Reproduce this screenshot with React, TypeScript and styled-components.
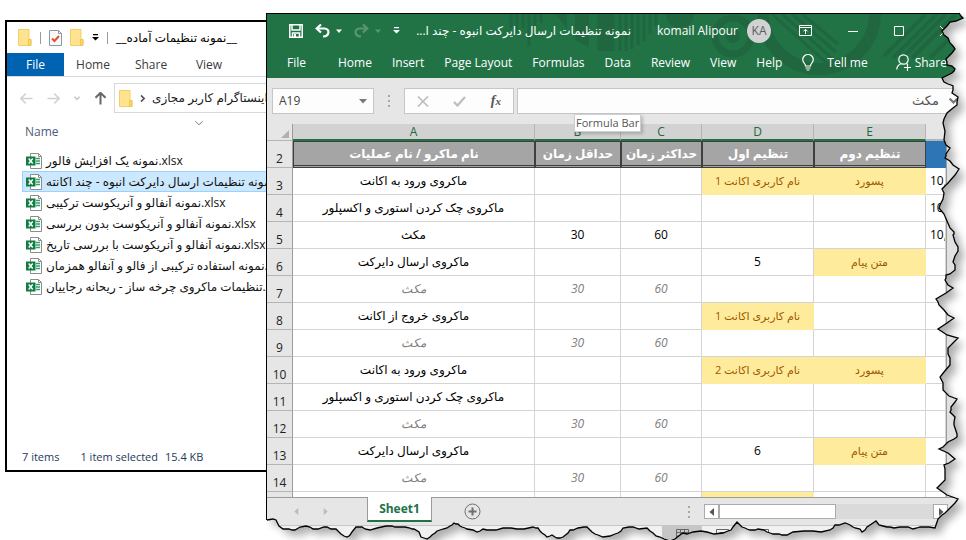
import React from "react";
import styled, { createGlobalStyle, css } from "styled-components";

const Global = createGlobalStyle`
  *, *::before, *::after { box-sizing: border-box; }
  body { margin: 0; background: #fff; font: 12px/16px "Open Sans", "DejaVu Sans", sans-serif; color: #1b1b1b; }
  button, input { font: inherit; color: inherit; border: 0; margin: 0; padding: 0; background: none; }
  svg { display: block; flex: none; }
`;

/* ---------- desktop and windows ---------- */

const Desktop = styled.main`
  position: relative;
  height: 100vh;
  min-height: 320px;
  overflow: hidden;
`;

const ExplorerWindow = styled.section`
  position: absolute;
  left: 5px;
  top: 20px;
  bottom: 68px;
  width: 320px;
  display: flex;
  flex-direction: column;
  border: 2px solid #000;
  background: #fff;
`;

const ExcelWindow = styled.section`
  position: absolute;
  left: 266px;
  top: 13px;
  right: 0;
  bottom: 0;
  display: flex;
  flex-direction: column;
  border-left: 1px solid #000;
  border-top: 1px solid #000;
  background: #e6e6e6;
`;

/* ---------- file explorer ---------- */

const ExplorerTitle = styled.header`
  display: flex;
  align-items: center;
  gap: 8px;
  height: 31px;
  padding-left: 11px;
  color: #000;
`;

const Divider = styled.span`
  width: 1px;
  height: 12px;
  background: #9a9a9a;
`;

const ExplorerTabs = styled.nav`
  display: flex;
  height: 24px;
  border-bottom: 1px solid #dadbdc;
`;

const ExplorerTab = styled.button<{ $active?: boolean }>`
  width: ${(p) => (p.$active ? 57 : 58)}px;
  color: ${(p) => (p.$active ? "#fff" : "#3b3b3b")};
  background: ${(p) => (p.$active ? "#0063b1" : "transparent")};
`;

const AddressRow = styled.div`
  display: flex;
  align-items: center;
  height: 42px;
`;

const NavButtons = styled.div`
  display: flex;
  align-items: center;
  width: 107px;
  gap: 14px;
  padding-left: 13px;
`;

const AddressBox = styled.div`
  flex: 1;
  display: flex;
  align-items: center;
  gap: 6px;
  height: 30px;
  padding-left: 4px;
  border: 1px solid #d9d9d9;
  white-space: nowrap;
  overflow: hidden;
`;

const ColumnHead = styled.button`
  display: flex;
  align-items: flex-start;
  height: 31px;
  padding-left: 18px;
  gap: 136px;
  color: #4c607a;
  text-align: left;

  span { padding-top: 5px; }
`;

const FileList = styled.ul`
  flex: 1;
  margin: 0;
  padding: 0 0 0 15px;
  list-style: none;
  overflow: hidden;
`;

const FileRow = styled.li<{ $selected?: boolean }>`
  display: flex;
  align-items: center;
  gap: 4px;
  height: 21px;
  padding-left: 3px;
  border: 1px solid ${(p) => (p.$selected ? "#99d1ff" : "transparent")};
  background: ${(p) => (p.$selected ? "#cce8ff" : "transparent")};
  color: #111;
  font-size: 12px;
  white-space: nowrap;
`;

const ExplorerStatus = styled.footer`
  display: flex;
  gap: 21px;
  height: 24px;
  align-items: center;
  padding: 0 0 2px 15px;
  color: #1e395b;
  font-size: 11px;

  span + span + span { margin-left: -14px; }
`;

/* ---------- spreadsheet chrome ---------- */

const ExcelHeader = styled.header`
  position: relative;
  flex: none;
  background: #217346;
  color: #fff;
  overflow: hidden;
`;

const HeaderArt = styled.svg`
  position: absolute;
  left: 0;
  top: 0;
`;

const TitleRow = styled.div`
  position: relative;
  display: flex;
  align-items: center;
  height: 33px;
  padding: 0 0 0 22px;
  white-space: nowrap;
`;

const QuickAccess = styled.div`
  display: flex;
  flex: none;
  align-items: center;
  gap: 12px;
  width: 132px;
`;

const ToolButton = styled.button<{ $dim?: boolean }>`
  display: flex;
  align-items: center;
  gap: 6px;
  opacity: ${(p) => (p.$dim ? 0.25 : 1)};
`;

const DocTitle = styled.h1`
  flex: none;
  width: 210px;
  margin: 0;
  font: inherit;
  font-size: 12px;
  white-space: nowrap;
`;

const Account = styled.div`
  display: flex;
  flex: none;
  align-items: center;
  justify-content: flex-end;
  gap: 9px;
  width: 140px;
`;

const Avatar = styled.span`
  width: 24px;
  height: 24px;
  border-radius: 50%;
  background: #d2d2d2;
  color: #5c5c5c;
  font-size: 12px;
  line-height: 24px;
  text-align: center;
`;

const WindowButtons = styled.div`
  display: flex;
  align-items: center;
  gap: 36px;
  margin-left: 28px;
`;

const RibbonTabs = styled.nav`
  position: relative;
  display: flex;
  align-items: center;
  gap: 20px;
  height: 31px;
  padding-left: 20px;
  white-space: nowrap;
`;

const RibbonTab = styled.button<{ $first?: boolean; $far?: boolean }>`
  display: flex;
  flex: none;
  align-items: center;
  gap: ${(p) => (p.$far ? 4 : 13)}px;
  margin-right: ${(p) => (p.$first ? 12 : 0)}px;
  margin-left: ${(p) => (p.$far ? 8 : 0)}px;
`;

const FormulaRow = styled.div`
  display: flex;
  align-items: center;
  flex: none;
  height: 46px;
  padding-left: 5px;
`;

const NameBox = styled.div`
  display: flex;
  align-items: center;
  width: 102px;
  height: 26px;
  padding: 0 6px;
  border: 1px solid #c6c6c6;
  background: #fdfdfd;
  color: #444;

  input { flex: 1; width: 60px; }
`;

const Dots = styled.span`
  display: grid;
  gap: 3px;
  width: 30px;
  justify-content: center;

  i { width: 2px; height: 2px; background: #a8a8a8; }
`;

const FormulaActions = styled.div`
  display: flex;
  align-items: center;
  justify-content: space-between;
  width: 110px;
  height: 26px;
  padding: 0 12px;
  border: 1px solid #c6c6c6;
  background: #fdfdfd;
`;

const FxButton = styled.button`
  font: italic bold 14px/16px "Liberation Serif", serif;
  color: #555;

  small { font-size: 11px; }
`;

const FormulaBox = styled.div`
  flex: 1;
  display: flex;
  align-items: center;
  gap: 10px;
  height: 26px;
  margin-left: 3px;
  padding: 0 8px 2px 8px;
  border: 1px solid #c6c6c6;
  border-right: 0;
  background: #fdfdfd;
  color: #555;

  input { flex: 1; min-width: 0; text-align: right; font-size: 13px; }
`;

const Tooltip = styled.div`
  position: absolute;
  left: 307px;
  top: 100px;
  height: 18px;
  padding: 0 1px;
  border: 1px solid #cfcfcf;
  background: #fff;
  color: #575757;
  font-size: 11px;
  line-height: 16px;
  box-shadow: 2px 2px 3px rgba(0, 0, 0, 0.2);
`;

/* ---------- sheet ---------- */

const SheetArea = styled.div`
  flex: 1;
  min-height: 0;
  display: flex;
  overflow: hidden;
  border-bottom: 1px solid #9b9b9b;
`;

const ScrollTrack = styled.div`
  flex: none;
  width: 20px;
  border-left: 1px solid #9b9b9b;
  background: #e1e1e1;
`;

const Grid = styled.table`
  flex: 1;
  min-width: 0;
  width: 100%;
  height: max-content;
  table-layout: fixed;
  border-collapse: separate;
  border-spacing: 0;
  background: #fff;
`;

const ColHead = styled.th<{ $plain?: boolean }>`
  height: 17px;
  padding: 0;
  font-weight: 400;
  line-height: 14px;
  color: #216843;
  background: ${(p) => (p.$plain ? "#e6e6e6" : "#d2d2d2")};
  border-right: 1px solid ${(p) => (p.$plain ? "#e6e6e6" : "#b5b5b5")};
  border-bottom: 2px solid ${(p) => (p.$plain ? "#b5b5b5" : "#217346")};
`;

const Corner = styled.th`
  height: 17px;
  padding: 3px 3px 0 14px;
  background: #e6e6e6;
  border-right: 1px solid #9b9b9b;
  border-bottom: 1px solid #b5b5b5;
`;

const RowHead = styled.th`
  height: 27px;
  padding: 9px 0 0;
  font-weight: 400;
  font-size: 12px;
  line-height: 16px;
  color: #222;
  background: #e6e6e6;
  border-right: 1px solid #9b9b9b;
  border-bottom: 1px solid #b5b5b5;
`;

type CellKind = "plain" | "muted" | "input" | "head" | "blue" | "left";

const kinds = {
  plain: css`color: #000;`,
  muted: css`color: #808080; font-style: italic;`,
  input: css`color: #9c5700; background: #ffeb9c; border-color: #ffeb9c;`,
  head: css`
    color: #fff;
    font-weight: 700;
    background: #a5a5a5;
    border: 1px solid #3f3f3f;
    box-shadow: inset 0 -1px 0 #a5a5a5, inset 0 -2px 0 #3f3f3f;
  `,
  blue: css`background: #2e75b6; border-color: #2e75b6;`,
  left: css`color: #000; text-align: left; padding-left: 4px;`,
};

const Cell = styled.td<{ $kind: CellKind; $small?: boolean }>`
  height: 27px;
  padding: 0 0 1px;
  overflow: hidden;
  font-size: ${(p) => (p.$small ? 11 : 12)}px;
  line-height: 18px;
  text-align: center;
  white-space: nowrap;
  border-right: 1px solid #d4d4d4;
  border-bottom: 1px solid #d4d4d4;
  ${(p) => kinds[p.$kind]}
`;

const SheetBar = styled.div`
  display: flex;
  flex: none;
  height: 28px;
  border-bottom: 1px solid #c6c6c6;
`;

const SheetNav = styled.div`
  display: flex;
  align-items: center;
  gap: 22px;
  width: 100px;
  padding-left: 26px;
`;

const SheetTab = styled.button`
  position: relative;
  width: 65px;
  height: 25px;
  margin-top: -1px;
  background: #fff;
  border-left: 1px solid #9b9b9b;
  border-right: 1px solid #9b9b9b;
  border-bottom: 2px solid #217346;
  color: #217346;
  font-weight: 700;
`;

const AddSheet = styled.button`
  display: flex;
  align-items: center;
  margin-left: 32px;
`;

const HScroll = styled.div`
  display: flex;
  align-items: center;
  margin-left: auto;
  padding-right: 18px;
`;

const ScrollButton = styled.button`
  display: grid;
  place-items: center;
  width: 15px;
  height: 15px;
  border: 1px solid #ababab;
  background: #fff;
`;

const Rail = styled.div`
  width: 214px;
  height: 15px;
  background: #dadada;

  &::before {
    content: "";
    display: block;
    width: 117px;
    height: 15px;
    border: 1px solid #ababab;
    background: #fff;
  }
`;

const StatusBar = styled.footer`
  display: flex;
  flex: none;
  height: 14px;
  padding-left: 395px;
  background: #f1f1f1;
  color: #777;
  overflow: hidden;
`;

const ViewButton = styled.button<{ $on?: boolean }>`
  display: grid;
  justify-content: center;
  width: 40px;
  padding-top: 3px;
  background: ${(p) => (p.$on ? "#c6c6c6" : "transparent")};
`;

const TornLayer = styled.svg`
  position: absolute;
  left: 0;
  top: 0;
  width: 100%;
  height: 100%;
  pointer-events: none;
`;

/* ---------- icons ---------- */

const Folder = () => (
  <svg width="14" height="17" viewBox="0 0 14 17">
    <path d="M.5.5h10.500v10h2v6H.5z" fill="#ffe391" stroke="#f3cf62" />
    <path d="M10.500 10.500h2.500v5.500h-2.500z" fill="#ffd75e" stroke="#e9bf4c" strokeWidth=".7" />
  </svg>
);

const CheckedPage = () => (
  <svg width="13" height="16" viewBox="0 0 13 16">
    <path d="M.5.5h9l3 3v12H.5z" fill="#f7f9fb" stroke="#8d98a6" />
    <path d="M9.500.5v3h3" fill="none" stroke="#8d98a6" />
    <path d="m3 8.500 2.500 2.500L10 6" fill="none" stroke="#e8501f" strokeWidth="2" />
  </svg>
);

const Overflow = ({ color = "#000" }: { color?: string }) => (
  <svg width="7" height="7" viewBox="0 0 7 7" fill={color}>
    <path d="M1 0h5v1.300H1zM0 3h7L3.500 6.500z" />
  </svg>
);

const Arrow = ({ turn, color, size = 13, weight = 1.6 }: { turn: number; color: string; size?: number; weight?: number }) => (
  <svg width={size} height={size} viewBox="0 0 13 13" fill="none" stroke={color} strokeWidth={weight}>
    <path transform={`rotate(${turn} 6.500 6.500)`} d="M12.500 6.500H1M5.800 1.500l-5 5 5 5" />
  </svg>
);

const Chevron = ({ turn = 0, color = "#777", size = 8, weight = 1 }: { turn?: number; color?: string; size?: number; weight?: number }) => (
  <svg width={size} height={size} viewBox="0 0 8 8" fill="none" stroke={color} strokeWidth={weight}>
    <path transform={`rotate(${turn} 4 4)`} d="m.5 2.300 3.500 3.500 3.500-3.500" />
  </svg>
);

const Triangle = ({ turn = 0, color = "#777", size = 8 }: { turn?: number; color?: string; size?: number }) => (
  <svg width={size} height={size} viewBox="0 0 8 8" fill={color}>
    <path transform={`rotate(${turn} 4 4)`} d="M0 2h8L4 6.500z" />
  </svg>
);

const ExcelFile = () => (
  <svg width="16" height="16" viewBox="0 0 16 16">
    <path d="M4.500.5h8l3 3v12h-11z" fill="#fff" stroke="#8c8c8c" />
    <path d="M12.500.5v3h3" fill="none" stroke="#8c8c8c" />
    <path d="M10 5.500h4M10 8h4M10 10.500h4" stroke="#33a06f" strokeWidth="1.300" />
    <path d="M0 3.500h9.500v9H0z" fill="#107c41" />
    <path d="m2.700 5.500 4 5M6.700 5.500l-4 5" stroke="#fff" strokeWidth="1.500" />
  </svg>
);

const Save = () => (
  <svg width="14" height="14" viewBox="0 0 14 14" fill="none" stroke="#fff" strokeWidth="1.500">
    <path d="M.8.8h12.400v12.400H.8zM3 1v5h8V1M3.500 13V9h7v4" />
    <path d="M5 10h2v3H5z" fill="#fff" stroke="none" />
  </svg>
);

const Undo = ({ flip }: { flip?: boolean }) => (
  <svg width="15" height="14" viewBox="0 0 15 14" fill="none" stroke="#fff" strokeWidth="2.200">
    <g transform={flip ? "matrix(-1 0 0 1 15 0)" : undefined}>
      <path d="M2 4.500h7.500c5.500 0 5.500 7.500-1.500 8" />
      <path d="M6 .5l-4.300 4 4.300 4" />
    </g>
  </svg>
);

const Bulb = () => (
  <svg width="12" height="17" viewBox="0 0 12 17" fill="none" stroke="#fff" strokeWidth="1.200">
    <path d="M3.500 12C3.500 9.500.700 8.800.700 5.600a5.300 5.100 0 0 1 10.600 0c0 3.200-2.800 3.900-2.800 6.400zM3.500 14h5M4.500 16h3" />
  </svg>
);

const Person = () => (
  <svg width="15" height="17" viewBox="0 0 15 17" fill="none" stroke="#fff" strokeWidth="1.200">
    <circle cx="7.500" cy="5.500" r="4.700" />
    <path d="M.700 15.500c.3-3 2-5 4.300-5.800M10.500 9.500l1 .8M11.500 10v7M8 13.500h7" />
  </svg>
);

const RibbonOptions = () => (
  <svg width="13" height="11" viewBox="0 0 13 11" fill="none" stroke="#fff">
    <path d="M.5.5h12v10H.5zM.5 2.500h12M6.500 9V4.500M4.500 6.300l2-2 2 2" />
  </svg>
);

const ringArt = "#20663f";

const Decoration = () => (
  <HeaderArt width="700" height="64" viewBox="267 14 700 64" aria-hidden="true">
    <g fill="none" stroke={ringArt}>
      <path d="M511 14v14M517 14v20M523 14v14M529 14v32M535 14v14M541 14v9" strokeWidth="3" />
      <path d="M606 14v37" strokeWidth="17" />
      <path d="M620 14v37M626 14v37M632 14v35M638 14v31M644 14v27M650 14v20M656 14v12" strokeWidth="3" />
      <circle cx="733" cy="36" r="18" strokeWidth="7" />
      <circle cx="819" cy="13" r="56" strokeWidth="12" />
      <path d="M772 14l58 52M782 14l52 46M792 14l44 38M802 14l36 30" strokeWidth="3" />
      <path d="M893 58l44-44M900 60l46-46M912 58l44-44M930 58l34-34M884 56l42-42" strokeWidth="4" />
    </g>
    <g fill={ringArt}>
      <circle cx="680" cy="14" r="14" />
      <circle cx="733" cy="36" r="7" />
      <path d="M556 14h11v15zM575 14h14v33l-14-7z" />
    </g>
  </HeaderArt>
);

/* ---------- torn edge ---------- */

const edge: [number, number][] = [
  [959, 13], [963, 18], [950, 22], [942, 31], [944, 35], [950, 43], [955, 49], [946, 59], [947, 65],
  [955, 69], [952, 73], [942, 78], [948, 84], [953, 86], [952, 93], [958, 97], [957, 105], [947, 113],
  [943, 123], [944, 140], [950, 148], [946, 154], [945, 158], [953, 165], [959, 169], [948, 183],
  [942, 189], [943, 199], [939, 208], [947, 221], [954, 232], [953, 235], [958, 247], [955, 256],
  [953, 262], [955, 270], [946, 275], [945, 280], [953, 288], [936, 299], [939, 305], [944, 310],
  [954, 318], [938, 329], [958, 338], [948, 348], [950, 358], [950, 365], [940, 377], [943, 390],
  [957, 399], [951, 407], [950, 412], [955, 417], [954, 425], [956, 431], [957, 437], [948, 442],
  [939, 449], [955, 459], [944, 465], [945, 472], [945, 480], [937, 488], [958, 499], [949, 509],
  [942, 515], [938, 519], [935, 528], [920, 527], [913, 529], [900, 527], [890, 527], [883, 526],
  [876, 521], [867, 527], [862, 532], [855, 528], [850, 525], [845, 523], [835, 525], [830, 530],
  [813, 531], [793, 532], [782, 535], [773, 534], [767, 532], [758, 529], [752, 530], [747, 529],
  [742, 527], [737, 522], [731, 530], [723, 533], [707, 532], [693, 532], [683, 533], [675, 539],
  [667, 540], [660, 537], [653, 533], [647, 528], [633, 527], [623, 528], [618, 533], [610, 536],
  [598, 535], [592, 532], [587, 527], [578, 528], [570, 530], [563, 537], [557, 538], [552, 535],
  [547, 537], [542, 533], [538, 528], [533, 527], [517, 529], [503, 528], [490, 530], [483, 529],
  [477, 532], [467, 529], [462, 527], [458, 524], [454, 523], [450, 526], [443, 529], [437, 531],
  [432, 535], [427, 539], [421, 537], [414, 529], [410, 528], [397, 527], [392, 526], [377, 528],
  [365, 529], [356, 527], [350, 535], [347, 537], [341, 534], [336, 529], [327, 527], [318, 529],
  [310, 527], [300, 527], [292, 530], [283, 529], [276, 520], [267, 520],
];

/* Adds a small repeatable zigzag between the main points, as torn paper has. */
const tornLine = edge
  .map(([x, y], i) => {
    if (i === 0) return `M${x} ${y}`;
    const [px, py] = edge[i - 1];
    const jag = (i % 2 ? 1 : -1) * (Math.hypot(x - px, y - py) > 8 ? 1 : 0);
    return `L${Math.round((px + x) / 2) + jag} ${Math.round((py + y) / 2) - jag}L${x} ${y}`;
  })
  .join("");

const outside = `${tornLine}L266 520L266 541L967 541L967 12L959 12Z`;
const paper = `${tornLine}L267 13Z`;

const TornEdge = () => (
  <TornLayer viewBox="0 0 966 540" preserveAspectRatio="none" aria-hidden="true">
    <defs>
      <clipPath id="outside"><path d={outside} /></clipPath>
      <filter id="soft" x="-5%" y="-5%" width="110%" height="110%"><feGaussianBlur stdDeviation="4" /></filter>
    </defs>
    <g clipPath="url(#outside)">
      <path d={outside} fill="#fff" />
      <path d={paper} transform="translate(6 6)" fill="#000" opacity=".32" filter="url(#soft)" />
    </g>
    <path d={tornLine} fill="none" stroke="#000" strokeWidth="1.300" />
  </TornLayer>
);

/* ---------- data ---------- */

const files = [
  "نمونه یک افزایش فالور.xlsx",
  "نمونه تنظیمات ارسال دایرکت انبوه - چند اکانته.xlsx",
  "نمونه آنفالو و آنریکوست ترکیبی.xlsx",
  "نمونه آنفالو و آنریکوست بدون بررسی.xlsx",
  "نمونه آنفالو و آنریکوست با بررسی تاریخ.xlsx",
  "نمونه استفاده ترکیبی از فالو و آنفالو همزمان.xlsx",
  "تنظیمات ماکروی چرخه ساز - ریحانه رجاییان.xlsx",
];

const headings = ["نام ماکرو / نام عملیات", "حداقل زمان", "حداکثر زمان", "تنظیم اول", "تنظیم دوم"];

type Row = { a: string; b?: string; c?: string; d?: string; e?: string; f?: string; muted?: boolean };

const login = "ماکروی ورود به اکانت";
const explore = "ماکروی چک کردن استوری و اکسپلور";
const send = "ماکروی ارسال دایرکت";
const pause: Row = { a: "مکث", b: "30", c: "60", muted: true };

const rows: Row[] = [
  { a: login, d: "نام کاربری اکانت 1", e: "پسورد", f: "10," },
  { a: explore, f: "10," },
  { a: "مکث", b: "30", c: "60", f: "10," },
  { a: send, d: "5", e: "متن پیام" },
  pause,
  { a: "ماکروی خروج از اکانت", d: "نام کاربری اکانت 1" },
  pause,
  { a: login, d: "نام کاربری اکانت 2", e: "پسورد" },
  { a: explore },
  pause,
  { a: send, d: "6", e: "متن پیام" },
  pause,
];

const isLabel = (t?: string) => !!t && t.length > 1;

const ribbon = ["File", "Home", "Insert", "Page Layout", "Formulas", "Data", "Review", "View", "Help"];

/* ---------- views ---------- */

const Explorer = () => (
  <ExplorerWindow aria-label="File Explorer">
    <ExplorerTitle>
      <Folder />
      <Divider />
      <CheckedPage />
      <Folder />
      <Overflow />
      <Divider />
      <span>__نمونه تنظیمات آماده__</span>
    </ExplorerTitle>
    <ExplorerTabs>
      <ExplorerTab $active>File</ExplorerTab>
      <ExplorerTab>Home</ExplorerTab>
      <ExplorerTab>Share</ExplorerTab>
      <ExplorerTab>View</ExplorerTab>
    </ExplorerTabs>
    <AddressRow>
      <NavButtons>
        <button aria-label="Back"><Arrow turn={0} color="#d0d0d0" /></button>
        <button aria-label="Forward"><Arrow turn={180} color="#d0d0d0" /></button>
        <button aria-label="Recent"><Chevron color="#c8c8c8" size={6} weight={2} /></button>
        <button aria-label="Up"><Arrow turn={90} color="#666" weight={2} /></button>
      </NavButtons>
      <AddressBox>
        <Folder />
        <Chevron turn={-90} color="#555" size={7} weight={2} />
        <span>ربات اینستاگرام کاربر مجازی</span>
      </AddressBox>
    </AddressRow>
    <ColumnHead>
      <span>Name</span>
      <Chevron />
    </ColumnHead>
    <FileList>
      {files.map((name, i) => (
        <FileRow key={name} $selected={i === 1}>
          <ExcelFile />
          {name}
        </FileRow>
      ))}
    </FileList>
    <ExplorerStatus>
      <span>7 items</span>
      <span>1 item selected</span>
      <span>15.4 KB</span>
    </ExplorerStatus>
  </ExplorerWindow>
);

const Sheet = () => (
  <SheetArea>
    <Grid>
      <colgroup>
        <col width="26" />
        <col width="242" />
        <col width="86" />
        <col width="81" />
        <col width="112" />
        <col width="112" />
        <col />
      </colgroup>
      <thead>
        <tr>
          <Corner aria-label="Select all">
            <svg width="8" height="8" viewBox="0 0 8 8"><path d="M8 0v8H0z" fill="#b0b0b0" /></svg>
          </Corner>
          {["A", "B", "C", "D", "E"].map((c) => <ColHead key={c}>{c}</ColHead>)}
          <ColHead $plain />
        </tr>
      </thead>
      <tbody>
        <tr>
          <RowHead>2</RowHead>
          {headings.map((h) => <Cell key={h} $kind="head" dir="rtl">{h}</Cell>)}
          <Cell $kind="blue" />
        </tr>
        {rows.map((r, i) => {
          const base: CellKind = r.muted ? "muted" : "plain";
          return (
            <tr key={i}>
              <RowHead>{i + 3}</RowHead>
              <Cell $kind={base} dir="rtl">{r.a}</Cell>
              <Cell $kind={base}>{r.b}</Cell>
              <Cell $kind={base}>{r.c}</Cell>
              <Cell $kind={isLabel(r.d) ? "input" : base} $small={isLabel(r.d)} dir="rtl">{r.d}</Cell>
              <Cell $kind={isLabel(r.e) ? "input" : base} $small={isLabel(r.e)} dir="rtl">{r.e}</Cell>
              <Cell $kind="left">{r.f}</Cell>
            </tr>
          );
        })}
        <tr>
          <RowHead />
          <Cell $kind="plain" />
          <Cell $kind="plain" />
          <Cell $kind="plain" />
          <Cell $kind="input" />
          <Cell $kind="plain" />
          <Cell $kind="plain" />
        </tr>
      </tbody>
    </Grid>
    <ScrollTrack />
  </SheetArea>
);

const Excel = () => (
  <ExcelWindow aria-label="Spreadsheet">
    <ExcelHeader>
      <Decoration />
      <TitleRow>
        <QuickAccess>
          <ToolButton aria-label="Save"><Save /></ToolButton>
          <ToolButton aria-label="Undo"><Undo /><Triangle color="#fff" size={6} /></ToolButton>
          <ToolButton aria-label="Redo" $dim><Undo flip /><Triangle color="#fff" size={6} /></ToolButton>
          <ToolButton aria-label="Customize toolbar"><Overflow color="#fff" /></ToolButton>
        </QuickAccess>
        <DocTitle dir="rtl">نمونه تنظیمات ارسال دایرکت انبوه - چند ا...</DocTitle>
        <Account>
          <span>komail Alipour</span>
          <Avatar>KA</Avatar>
        </Account>
        <WindowButtons>
          <button aria-label="Ribbon options"><RibbonOptions /></button>
          <button aria-label="Minimize">
            <svg width="10" height="10" viewBox="0 0 10 10"><path d="M0 5.500h10" stroke="#fff" /></svg>
          </button>
          <button aria-label="Maximize">
            <svg width="10" height="10" viewBox="0 0 10 10"><path d="M.5.5h9v9h-9z" fill="none" stroke="#fff" /></svg>
          </button>
          <button aria-label="Close">
            <svg width="10" height="10" viewBox="0 0 10 10"><path d="m0 0 10 10M10 0 0 10" stroke="#fff" /></svg>
          </button>
        </WindowButtons>
      </TitleRow>
      <RibbonTabs>
        {ribbon.map((t, i) => <RibbonTab key={t} $first={i === 0}>{t}</RibbonTab>)}
        <RibbonTab><Bulb />Tell me</RibbonTab>
        <RibbonTab $far><Person />Share</RibbonTab>
      </RibbonTabs>
    </ExcelHeader>
    <FormulaRow>
      <NameBox>
        <input aria-label="Name box" defaultValue="A19" />
        <button aria-label="Named ranges"><Triangle /></button>
      </NameBox>
      <Dots><i /><i /><i /></Dots>
      <FormulaActions>
        <button aria-label="Cancel">
          <svg width="12" height="11" viewBox="0 0 12 11"><path d="m1 .5 10 10M11 .5l-10 10" stroke="#bdbdbd" strokeWidth="1.600" /></svg>
        </button>
        <button aria-label="Enter">
          <svg width="13" height="11" viewBox="0 0 13 11"><path d="m1 6 3.500 3.500L12 1" fill="none" stroke="#bdbdbd" strokeWidth="2.200" /></svg>
        </button>
        <FxButton aria-label="Insert function">f<small>x</small></FxButton>
      </FormulaActions>
      <FormulaBox>
        <input aria-label="Formula bar" dir="rtl" defaultValue="مکث" />
        <button aria-label="Expand formula bar"><Chevron size={9} weight={2} /></button>
      </FormulaBox>
    </FormulaRow>
    <Sheet />
    <SheetBar>
      <SheetNav>
        <button aria-label="Previous sheet"><Triangle turn={90} color="#bcbcbc" size={7} /></button>
        <button aria-label="Next sheet"><Triangle turn={-90} color="#bcbcbc" size={7} /></button>
      </SheetNav>
      <SheetTab>Sheet1</SheetTab>
      <AddSheet aria-label="New sheet">
        <svg width="17" height="17" viewBox="0 0 17 17" fill="none" stroke="#6f6f6f">
          <circle cx="8.500" cy="8.500" r="7.500" />
          <path d="M8.500 4.500v8M4.500 8.500h8" strokeWidth="2" />
        </svg>
      </AddSheet>
      <HScroll>
        <Dots><i /><i /><i /></Dots>
        <ScrollButton aria-label="Scroll left"><Triangle turn={90} color="#555" /></ScrollButton>
        <Rail />
        <ScrollButton aria-label="Scroll right"><Triangle turn={-90} color="#555" /></ScrollButton>
      </HScroll>
    </SheetBar>
    <StatusBar>
      {[0, 1, 2].map((n) => (
        <ViewButton key={n} $on={n === 0} aria-label={["Normal", "Page layout", "Page break"][n]}>
          <svg width="13" height="11" viewBox="0 0 13 11" fill="none" stroke="#666">
            <path d={n === 0 ? "M.5.5h12v10H.5zM4.500.5v10M8.500.5v10M.5 3.500h12M.5 7h12" : "M.5.5h12v10H.5zM3.500 3.500h6v7"} />
          </svg>
        </ViewButton>
      ))}
    </StatusBar>
    <Tooltip role="tooltip">Formula Bar</Tooltip>
  </ExcelWindow>
);

export default function App() {
  return (
    <>
      <Global />
      <Desktop>
        <Explorer />
        <Excel />
        <TornEdge />
      </Desktop>
    </>
  );
}
